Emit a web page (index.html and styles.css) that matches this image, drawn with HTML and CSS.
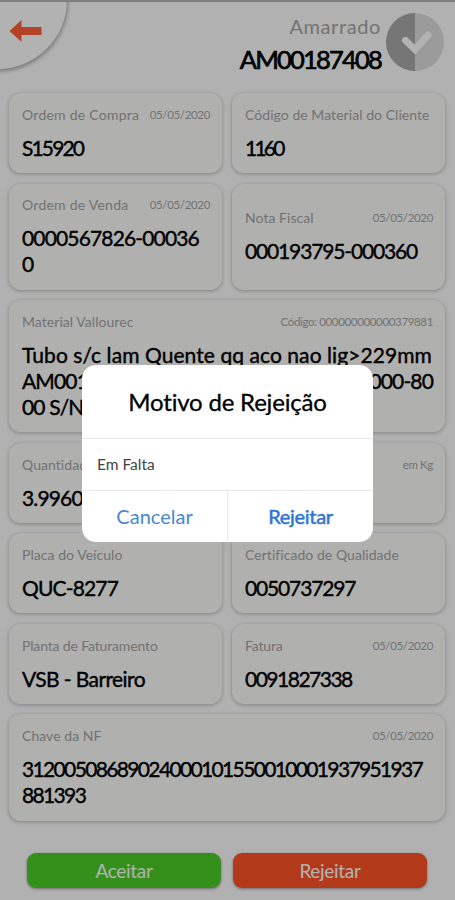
FILE: index.html
```html
<!DOCTYPE html>
<html lang="pt-BR">
<head>
    <meta charset="UTF-8">
    <meta name="viewport" content="width=device-width, initial-scale=1.0">
    <title>Amarrado</title>
    <link rel="stylesheet" href="styles.css">
</head>
<body>
    <div class="screen">
        <header class="header">
            <div class="title">
                <span class="title-label">Amarrado</span>
                <strong class="title-code">AM00187408</strong>
            </div>
            <svg class="status" viewBox="0 0 58 58">
                <circle cx="29" cy="29" r="29" fill="#dedede"/>
                <path d="M29 0a29 29 0 0 0 0 58z" fill="#aaaaaa"/>
                <path d="M19.500 27.500l9.500 9 13-14.500" fill="none" stroke="#fff" stroke-width="7" stroke-linecap="round"/>
            </svg>
        </header>

        <main class="cards">
            <div class="card">
                <div class="card-top"><span class="label loose">Ordem de Compra</span><span class="date">05/05/2020</span></div>
                <div class="value tighter">S15920</div>
            </div>
            <div class="card">
                <div class="card-top"><span class="label">Código de Material do Cliente</span></div>
                <div class="value tightest">1160</div>
            </div>
            <div class="card">
                <div class="card-top"><span class="label loose">Ordem de Venda</span><span class="date">05/05/2020</span></div>
                <div class="value">0000567826-00036<br>0</div>
            </div>
            <div class="card">
                <div class="card-top"><span class="label">Nota Fiscal</span><span class="date">05/05/2020</span></div>
                <div class="value tight">000193795-000360</div>
            </div>
            <div class="card wide">
                <div class="card-top"><span class="label">Material Vallourec</span><span class="date">Código: 000000000000379881</span></div>
                <div class="value">
                    <div class="material">Tubo s/c lam Quente qq aco nao lig&gt;229mm</div>
                    <div class="split"><span>AM00187408</span><span>12000-80</span></div>
                    <div>00 S/N</div>
                </div>
            </div>
            <div class="card wide">
                <div class="card-top"><span class="label">Quantidade</span><span class="date">em Kg</span></div>
                <div class="value">3.9960</div>
            </div>
            <div class="card">
                <div class="card-top"><span class="label">Placa do Veículo</span></div>
                <div class="value">QUC-8277</div>
            </div>
            <div class="card">
                <div class="card-top"><span class="label">Certificado de Qualidade</span></div>
                <div class="value tight">0050737297</div>
            </div>
            <div class="card">
                <div class="card-top"><span class="label snug">Planta de Faturamento</span></div>
                <div class="value words">VSB - Barreiro</div>
            </div>
            <div class="card">
                <div class="card-top"><span class="label snug">Fatura</span><span class="date">05/05/2020</span></div>
                <div class="value invoice">0091827338</div>
            </div>
            <div class="card wide">
                <div class="card-top"><span class="label">Chave da NF</span><span class="date">05/05/2020</span></div>
                <div class="value key">31200508689024000101550010001937951937<br>881393</div>
            </div>
        </main>

        <footer class="actions">
            <button class="btn accept">Aceitar</button>
            <button class="btn reject">Rejeitar</button>
        </footer>

        <button class="back" aria-label="Voltar">
            <svg viewBox="0 0 32 22">
                <path d="M0 11L12 0v7h20v8H12v7z" fill="#ff6136"/>
            </svg>
        </button>
    </div>

    <div class="overlay">
        <div class="modal">
            <h2 class="modal-title">Motivo de Rejeição</h2>
            <div class="modal-reason">Em Falta</div>
            <div class="modal-actions">
                <button class="cancel">Cancelar</button>
                <button class="confirm">Rejeitar</button>
            </div>
        </div>
    </div>
</body>
</html>
```
FILE: styles.css
```css
* {
    box-sizing: border-box;
}

body {
    margin: 0;
    font-family: Lato, sans-serif;
    background: #fefefe;
}

button {
    font-family: inherit;
    border: none;
    padding: 0;
    background: none;
}

.screen {
    position: relative;
    height: 900px;
    overflow: hidden;
    border-top: 2px solid #b5b5b5;
}

.header {
    display: flex;
    justify-content: flex-end;
    gap: 5px;
    height: 91px;
    padding: 11px 11px 0 0;
}

.title {
    display: flex;
    flex-direction: column;
    align-items: flex-end;
}

.title-label {
    font-size: 20px;
    line-height: 27px;
    letter-spacing: 0.6px;
    color: #a6a6a6;
}

.title-code {
    font-size: 25.5px;
    line-height: 39px;
    font-weight: 400;
    letter-spacing: -1.8px;
    -webkit-text-stroke: 0.7px #000;
}

.status {
    width: 58px;
    height: 58px;
}

.back {
    position: absolute;
    left: -71px;
    top: -71px;
    width: 138px;
    height: 138px;
    border-radius: 50%;
    background: #fff;
    box-shadow: 0 1px 4px 1px rgba(0, 0, 0, 0.35);
}

.back svg {
    position: absolute;
    left: 80px;
    top: 89px;
    width: 33px;
    height: 22px;
}

.cards {
    display: grid;
    grid-template-columns: 213px 213px;
    gap: 10.5px 10px;
    padding-left: 9px;
}

.card {
    display: flex;
    flex-direction: column;
    justify-content: center;
    min-height: 80px;
    padding: 11px 12px 12px 13px;
    border-radius: 12px;
    background: #fdfdfb;
    box-shadow: 0 1px 4px rgba(0, 0, 0, 0.28);
}

.wide {
    grid-column: span 2;
}

.card-top {
    display: flex;
    justify-content: space-between;
    align-items: center;
    height: 20px;
    margin-bottom: 10.5px;
    white-space: nowrap;
    color: #a4a4a4;
}

.label {
    font-size: 14px;
    letter-spacing: 0.05px;
}

.label.loose {
    letter-spacing: 0.25px;
}

.label.snug {
    letter-spacing: -0.15px;
}

.date {
    font-size: 11.5px;
    letter-spacing: -0.35px;
}

.value {
    font-size: 21px;
    line-height: 26.3px;
    letter-spacing: -0.85px;
    white-space: nowrap;
    -webkit-text-stroke: 0.4px #000;
}

.value.tight {
    letter-spacing: -1.15px;
}

.value.invoice {
    letter-spacing: -1.5px;
}

.value.key {
    letter-spacing: -1.65px;
}

.value.tighter {
    letter-spacing: -1.85px;
}

.value.tightest {
    letter-spacing: -2.8px;
}

.value.words {
    letter-spacing: -0.6px;
}

.material {
    letter-spacing: 0.07px;
}

.split {
    display: flex;
    justify-content: space-between;
}

.actions {
    display: flex;
    gap: 12px;
    padding: 32px 27px 0;
}

.btn {
    width: 194px;
    height: 35px;
    border-radius: 9px;
    font-size: 19px;
    letter-spacing: -0.3px;
    color: #fff;
    box-shadow: 0 1px 3px rgba(0, 0, 0, 0.4);
}

.accept {
    background: #4dcf27;
}

.reject {
    background: #ff5328;
}

.overlay {
    position: absolute;
    inset: 0;
    display: flex;
    justify-content: center;
    align-items: flex-start;
    height: 900px;
    padding-top: 365px;
    background: rgba(0, 0, 0, 0.3);
}

.modal {
    width: 291px;
    height: 177px;
    overflow: hidden;
    border-radius: 14px;
    background: #fff;
}

.modal-title {
    height: 73px;
    margin: 0;
    font-size: 24px;
    font-weight: 400;
    line-height: 73px;
    letter-spacing: -0.2px;
    text-align: center;
    -webkit-text-stroke: 0.3px #000;
}

.modal-reason {
    height: 52px;
    padding-left: 15px;
    border-top: 1px solid #e9e9e9;
    font-size: 15.5px;
    line-height: 50px;
    color: #444;
}

.modal-actions {
    display: flex;
    height: 52px;
    padding-bottom: 1px;
    border-top: 1px solid #e9e9e9;
}

.modal-actions button {
    flex: 1;
    font-size: 20px;
    color: #4a86d4;
}

.modal-actions .confirm {
    border-left: 1px solid #e9e9e9;
    letter-spacing: -0.3px;
    color: #2f74d6;
    -webkit-text-stroke: 0.5px #2f74d6;
}
```
